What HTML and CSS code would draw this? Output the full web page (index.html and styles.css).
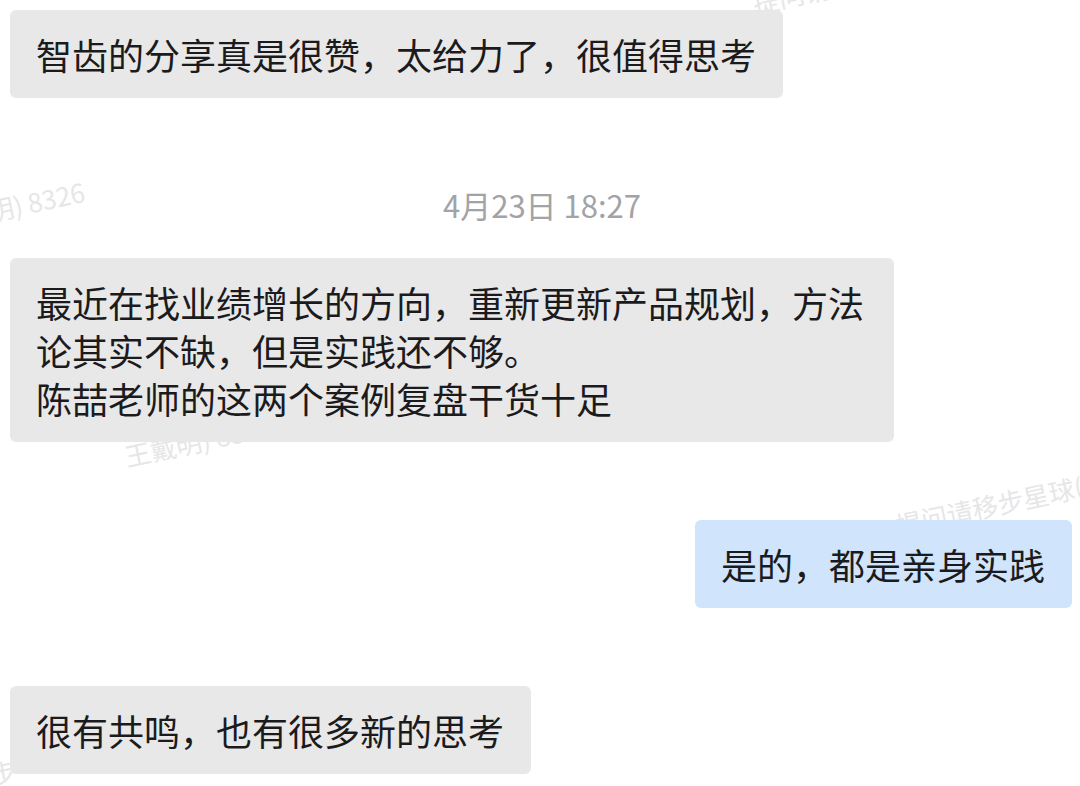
FILE: index.html
```html
<!DOCTYPE html>
<html lang="zh-CN">
<head>
<meta charset="utf-8">
<title>聊天记录</title>
<link rel="stylesheet" href="styles.css">
</head>
<body>
<div class="chat">
  <div class="watermarks" aria-hidden="true">
    <span class="wm wm-1">提问请</span>
    <span class="wm wm-2">明) 8326</span>
    <span class="wm wm-3">王戴明) 8326</span>
    <span class="wm wm-4">提问请移步星球(王</span>
    <span class="wm wm-5">步</span>
  </div>

  <div class="row row-left">
    <div class="bubble bubble-in">智齿的分享真是很赞，太给力了，很值得思考</div>
  </div>

  <div class="time">4月23日 18:27</div>

  <div class="row row-left">
    <div class="bubble bubble-in">最近在找业绩增长的方向，重新更新产品规划，方法论其实不缺，但是实践还不够。<br>陈喆老师的这两个案例复盘干货十足</div>
  </div>

  <div class="row row-right">
    <div class="bubble bubble-out">是的，都是亲身实践</div>
  </div>

  <div class="row row-left">
    <div class="bubble bubble-in">很有共鸣，也有很多新的思考</div>
  </div>
</div>
</body>
</html>
```

FILE: styles.css
```css
html, body {
  margin: 0;
  padding: 0;
  background: #ffffff;
}

body {
  width: 1080px;
  height: 786px;
  overflow: hidden;
  font-family: "Noto Sans CJK SC", "Noto Sans", sans-serif;
}

.chat {
  position: relative;
  display: flex;
  flex-direction: column;
  padding: 10px 8px 0 10px;
}

.watermarks {
  position: absolute;
  inset: 0;
  z-index: 0;
  pointer-events: none;
}

.wm {
  position: absolute;
  font-size: 26px;
  line-height: 26px;
  color: #e6e6e8;
  white-space: nowrap;
  transform: rotate(-12deg);
  transform-origin: 0 23px;
}

.wm-1 { left: 755px; top: -10px; }
.wm-2 { left: -10px; top: 198px; }
.wm-3 { left: 127px; top: 443px; }
.wm-4 { left: 898px; top: 512px; }
.wm-5 { left: -8px; top: 762px; }

.row {
  position: relative;
  z-index: 1;
  display: flex;
}

.row-left { justify-content: flex-start; }
.row-right { justify-content: flex-end; }

.row + .row { margin-top: 78px; }

.bubble {
  box-sizing: border-box;
  max-width: 884px;
  padding: 20px 27px 20px 26px;
  border-radius: 6px;
  font-size: 36px;
  line-height: 48px;
  color: #1b1b1d;
}

.bubble-in { background: #e8e8e8; }
.bubble-out { background: #d0e5fb; }

.time {
  position: relative;
  z-index: 1;
  margin: 87px 0 33px;
  text-align: center;
  font-size: 31px;
  line-height: 40px;
  color: #a2a3a6;
  padding-left: 2px;
}
```
